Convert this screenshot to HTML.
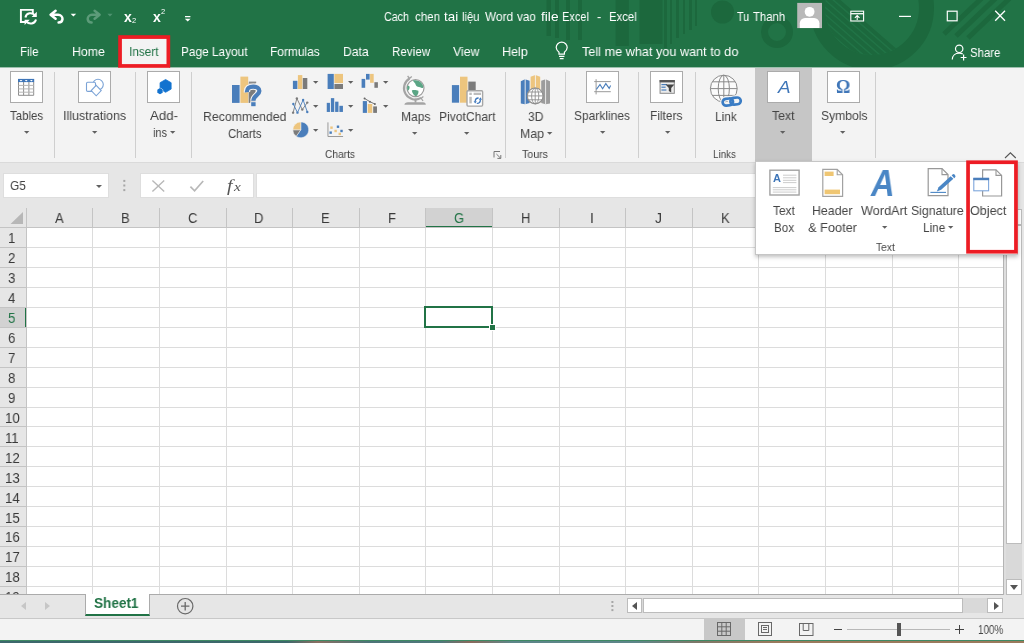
<!DOCTYPE html><html><head><meta charset="utf-8"><title>Excel</title><style>

html,body{margin:0;padding:0;}
body{width:1024px;height:643px;overflow:hidden;position:relative;background:#e6e6e6;font-family:"Liberation Sans",sans-serif;}
.a{position:absolute;box-sizing:border-box;}
.tl{position:absolute;white-space:pre;font-size:0;line-height:0;display:block;}
.tw{display:inline-block;vertical-align:top;line-height:1;white-space:pre;transform-origin:0 0;will-change:transform;}
.t{position:absolute;white-space:pre;line-height:1;transform-origin:0 0;display:block;will-change:transform;}
svg{overflow:visible;}

</style></head><body>
<div class="a " style="left:0px;top:0px;width:1024px;height:67px;background:#217346;"></div>
<div class="a " style="left:0px;top:67px;width:1024px;height:1px;background:#9cc0ad;"></div>
<svg class="a" style="left:0;top:0" width="1024" height="67" viewBox="0 0 1024 67"><defs><clipPath id="hc"><rect x="0" y="0" width="1024" height="67"/></clipPath><clipPath id="bigc"><circle cx="872" cy="8" r="47"/></clipPath></defs><g clip-path="url(#hc)" fill="#1c683d" stroke="none">
<rect x="546.5" y="0" width="4.5" height="36"/><rect x="555" y="0" width="4" height="38"/><rect x="566" y="0" width="4" height="40"/><rect x="578" y="0" width="4" height="40"/>
<rect x="615.6" y="0" width="13.2" height="46"/><rect x="639.5" y="0" width="23" height="44"/>
<rect x="664" y="0" width="3" height="48"/><rect x="670" y="0" width="2" height="44"/><rect x="676" y="0" width="3" height="38"/><rect x="683" y="0" width="2" height="34"/><rect x="689" y="0" width="3" height="30"/><rect x="695" y="0" width="2" height="26"/>
<circle cx="722.5" cy="12" r="11.5"/>
<circle cx="777" cy="32" r="12.5" fill="none" stroke="#1c683d" stroke-width="7"/>
<circle cx="872" cy="8" r="54.5" fill="none" stroke="#1c683d" stroke-width="15"/>
<g clip-path="url(#bigc)" stroke="#1c683d" stroke-width="3.9" fill="none"><path d="M832.8 -4L906.3 60M824.5 -4L898.0 60M816.3 -4L889.8 60M808.0 -4L881.5 60M799.8 -4L873.3 60M791.5 -4L865.0 60M783.3 -4L856.8 60"/></g>
<g stroke="#1c683d" stroke-width="5" fill="none"><path d="M944 34L984 -4M956 36L998 -4M968 38L1012 -4"/></g>
</g></svg>
<span class="tl" style="left:384.4px;top:10.96px;color:#fff;"><span class="tw" style="font-size:12.8px;width:25.00px;margin-left:0.00px;transform:scaleX(0.8368);">Cach</span> <span class="tw" style="font-size:12.8px;width:25.00px;margin-left:5.30px;transform:scaleX(0.9009);">chen</span> <span class="tw" style="font-size:12.8px;width:14.10px;margin-left:4.30px;transform:scaleX(1.0432);">tai</span> <span class="tw" style="font-size:12.8px;width:17.50px;margin-left:4.40px;transform:scaleX(0.8784);">liệu</span> <span class="tw" style="font-size:12.8px;width:28.10px;margin-left:4.70px;transform:scaleX(0.9261);">Word</span> <span class="tw" style="font-size:12.8px;width:18.80px;margin-left:4.70px;transform:scaleX(0.9108);">vao</span> <span class="tw" style="font-size:12.8px;width:17.50px;margin-left:4.30px;transform:scaleX(1.0697);">file</span> <span class="tw" style="font-size:12.8px;width:26.90px;margin-left:4.40px;transform:scaleX(0.8595);">Excel</span>  <span class="tw" style="font-size:12.8px;width:3.90px;margin-left:7.80px;transform:scaleX(0.9143);">-</span>  <span class="tw" style="font-size:12.8px;width:27.70px;margin-left:7.50px;transform:scaleX(0.8851);">Excel</span></span>
<span class="tl" style="left:737px;top:10.96px;color:#fff;"><span class="tw" style="font-size:12.8px;width:12.20px;margin-left:0.00px;transform:scaleX(0.8432);">Tu</span> <span class="tw" style="font-size:12.8px;width:32.10px;margin-left:4.30px;transform:scaleX(0.8844);">Thanh</span></span>
<span class="t" style="left:19.50px;top:45.13px;font-size:13.2px;color:#fff;transform:scaleX(0.8706);">File</span>
<span class="t" style="left:72.00px;top:45.13px;font-size:13.2px;color:#fff;transform:scaleX(0.9378);">Home</span>
<span class="t" style="left:180.50px;top:45.13px;font-size:13.2px;color:#fff;transform:scaleX(0.8979);">Page Layout</span>
<span class="t" style="left:269.90px;top:45.13px;font-size:13.2px;color:#fff;transform:scaleX(0.9060);">Formulas</span>
<span class="t" style="left:342.60px;top:45.13px;font-size:13.2px;color:#fff;transform:scaleX(0.9225);">Data</span>
<span class="t" style="left:391.50px;top:45.13px;font-size:13.2px;color:#fff;transform:scaleX(0.8809);">Review</span>
<span class="t" style="left:452.50px;top:45.13px;font-size:13.2px;color:#fff;transform:scaleX(0.9344);">View</span>
<span class="t" style="left:502.00px;top:45.13px;font-size:13.2px;color:#fff;transform:scaleX(0.9512);">Help</span>
<span class="t" style="left:582.00px;top:45.13px;font-size:13.2px;color:#fff;transform:scaleX(0.9605);">Tell me what you want to do</span>
<span class="t" style="left:970.00px;top:46.76px;font-size:12.8px;color:#fff;transform:scaleX(0.8900);">Share</span>
<div class="a " style="left:119px;top:36px;width:50px;height:32px;background:#f3f3f3;"></div>
<svg class="a" style="left:0px;top:0px;" width="1024" height="100" viewBox="0 0 1024 100"><rect x="120.05" y="37.05" width="48.3" height="28.9" fill="none" stroke="#ed1c24" stroke-width="3.7"/></svg>
<span class="t" style="left:128.50px;top:45.13px;font-size:13.2px;color:#217346;transform:scaleX(0.8944);">Insert</span>
<div class="a " style="left:0px;top:68px;width:1024px;height:94px;background:#f3f3f3;"></div>
<div class="a " style="left:0px;top:161.5px;width:1024px;height:1.5px;background:#dadada;"></div>
<div class="a " style="left:755px;top:68px;width:57px;height:94px;background:#c6c6c6;"></div>
<div class="a " style="left:54px;top:72px;width:1px;height:86px;background:#cfcfcf;"></div>
<div class="a " style="left:135px;top:72px;width:1px;height:86px;background:#cfcfcf;"></div>
<div class="a " style="left:191px;top:72px;width:1px;height:86px;background:#cfcfcf;"></div>
<div class="a " style="left:505px;top:72px;width:1px;height:86px;background:#cfcfcf;"></div>
<div class="a " style="left:565px;top:72px;width:1px;height:86px;background:#cfcfcf;"></div>
<div class="a " style="left:638px;top:72px;width:1px;height:86px;background:#cfcfcf;"></div>
<div class="a " style="left:695px;top:72px;width:1px;height:86px;background:#cfcfcf;"></div>
<div class="a " style="left:875px;top:72px;width:1px;height:86px;background:#cfcfcf;"></div>
<div class="a " style="left:10.2px;top:71.3px;width:33px;height:31.7px;background:#fff;border:1px solid #ababab;"></div>
<div class="a " style="left:78.3px;top:71.3px;width:33px;height:31.7px;background:#fff;border:1px solid #ababab;"></div>
<div class="a " style="left:147.3px;top:71.3px;width:33px;height:31.7px;background:#fff;border:1px solid #ababab;"></div>
<div class="a " style="left:586px;top:71.3px;width:33px;height:31.7px;background:#fff;border:1px solid #ababab;"></div>
<div class="a " style="left:650px;top:71.3px;width:33px;height:31.7px;background:#fff;border:1px solid #ababab;"></div>
<div class="a " style="left:767px;top:71.3px;width:33px;height:31.7px;background:#fff;border:1px solid #ababab;"></div>
<div class="a " style="left:827px;top:71.3px;width:33px;height:31.7px;background:#fff;border:1px solid #ababab;"></div>
<span class="t" style="left:9.80px;top:108.77px;font-size:13.5px;color:#444;transform:scaleX(0.8506);">Tables</span>
<svg class="a" style="left:23.8px;top:130.65px;" width="5.4" height="2.7" viewBox="0 0 5.4 2.7"><path d="M0 0H5.4L2.7 2.7Z" fill="#606060"/></svg>
<span class="t" style="left:63.30px;top:108.77px;font-size:13.5px;color:#444;transform:scaleX(0.9256);">Illustrations</span>
<svg class="a" style="left:92.3px;top:130.65px;" width="5.4" height="2.7" viewBox="0 0 5.4 2.7"><path d="M0 0H5.4L2.7 2.7Z" fill="#606060"/></svg>
<span class="t" style="left:150.00px;top:108.77px;font-size:13.5px;color:#444;transform:scaleX(0.9814);">Add-</span>
<span class="t" style="left:153.00px;top:125.57px;font-size:13.5px;color:#444;transform:scaleX(0.8109);">ins</span>
<svg class="a" style="left:169.8px;top:131.15px;" width="5.4" height="2.7" viewBox="0 0 5.4 2.7"><path d="M0 0H5.4L2.7 2.7Z" fill="#606060"/></svg>
<span class="t" style="left:202.50px;top:110.07px;font-size:13.5px;color:#444;transform:scaleX(0.9121);">Recommended</span>
<span class="t" style="left:227.50px;top:126.57px;font-size:13.5px;color:#444;transform:scaleX(0.8424);">Charts</span>
<span class="t" style="left:400.50px;top:110.07px;font-size:13.5px;color:#444;transform:scaleX(0.8935);">Maps</span>
<svg class="a" style="left:412.3px;top:131.65px;" width="5.4" height="2.7" viewBox="0 0 5.4 2.7"><path d="M0 0H5.4L2.7 2.7Z" fill="#606060"/></svg>
<span class="t" style="left:438.50px;top:110.07px;font-size:13.5px;color:#444;transform:scaleX(0.8964);">PivotChart</span>
<svg class="a" style="left:463.8px;top:131.65px;" width="5.4" height="2.7" viewBox="0 0 5.4 2.7"><path d="M0 0H5.4L2.7 2.7Z" fill="#606060"/></svg>
<span class="t" style="left:325.00px;top:149.47px;font-size:11.5px;color:#444;transform:scaleX(0.8856);">Charts</span>
<span class="t" style="left:527.50px;top:110.07px;font-size:13.5px;color:#444;transform:scaleX(0.8977);">3D</span>
<span class="t" style="left:519.50px;top:126.57px;font-size:13.5px;color:#444;transform:scaleX(0.9137);">Map</span>
<svg class="a" style="left:546.8px;top:131.65px;" width="5.4" height="2.7" viewBox="0 0 5.4 2.7"><path d="M0 0H5.4L2.7 2.7Z" fill="#606060"/></svg>
<span class="t" style="left:522.00px;top:149.47px;font-size:11.5px;color:#444;transform:scaleX(0.9244);">Tours</span>
<span class="t" style="left:574.00px;top:108.77px;font-size:13.5px;color:#444;transform:scaleX(0.8884);">Sparklines</span>
<svg class="a" style="left:599.6999999999999px;top:130.65px;" width="5.4" height="2.7" viewBox="0 0 5.4 2.7"><path d="M0 0H5.4L2.7 2.7Z" fill="#606060"/></svg>
<span class="t" style="left:650.20px;top:108.77px;font-size:13.5px;color:#444;transform:scaleX(0.8816);">Filters</span>
<svg class="a" style="left:664.5px;top:130.65px;" width="5.4" height="2.7" viewBox="0 0 5.4 2.7"><path d="M0 0H5.4L2.7 2.7Z" fill="#606060"/></svg>
<span class="t" style="left:714.60px;top:110.07px;font-size:13.5px;color:#444;transform:scaleX(0.8803);">Link</span>
<span class="t" style="left:713.00px;top:149.47px;font-size:11.5px;color:#444;transform:scaleX(0.8563);">Links</span>
<span class="t" style="left:772.00px;top:108.77px;font-size:13.5px;color:#444;transform:scaleX(0.9085);">Text</span>
<svg class="a" style="left:780.3px;top:130.65px;" width="5.4" height="2.7" viewBox="0 0 5.4 2.7"><path d="M0 0H5.4L2.7 2.7Z" fill="#606060"/></svg>
<span class="t" style="left:820.50px;top:108.77px;font-size:13.5px;color:#444;transform:scaleX(0.8983);">Symbols</span>
<svg class="a" style="left:840.3px;top:130.65px;" width="5.4" height="2.7" viewBox="0 0 5.4 2.7"><path d="M0 0H5.4L2.7 2.7Z" fill="#606060"/></svg>
<svg class="a" style="left:312.5px;top:80.65px;" width="5.4" height="2.7" viewBox="0 0 5.4 2.7"><path d="M0 0H5.4L2.7 2.7Z" fill="#606060"/></svg>
<svg class="a" style="left:312.5px;top:104.65px;" width="5.4" height="2.7" viewBox="0 0 5.4 2.7"><path d="M0 0H5.4L2.7 2.7Z" fill="#606060"/></svg>
<svg class="a" style="left:347.5px;top:80.65px;" width="5.4" height="2.7" viewBox="0 0 5.4 2.7"><path d="M0 0H5.4L2.7 2.7Z" fill="#606060"/></svg>
<svg class="a" style="left:347.5px;top:104.65px;" width="5.4" height="2.7" viewBox="0 0 5.4 2.7"><path d="M0 0H5.4L2.7 2.7Z" fill="#606060"/></svg>
<svg class="a" style="left:382.5px;top:80.65px;" width="5.4" height="2.7" viewBox="0 0 5.4 2.7"><path d="M0 0H5.4L2.7 2.7Z" fill="#606060"/></svg>
<svg class="a" style="left:382.5px;top:104.65px;" width="5.4" height="2.7" viewBox="0 0 5.4 2.7"><path d="M0 0H5.4L2.7 2.7Z" fill="#606060"/></svg>
<svg class="a" style="left:312.5px;top:128.65px;" width="5.4" height="2.7" viewBox="0 0 5.4 2.7"><path d="M0 0H5.4L2.7 2.7Z" fill="#606060"/></svg>
<svg class="a" style="left:347.5px;top:128.65px;" width="5.4" height="2.7" viewBox="0 0 5.4 2.7"><path d="M0 0H5.4L2.7 2.7Z" fill="#606060"/></svg>
<div class="a " style="left:0px;top:163px;width:1024px;height:45px;background:#e6e6e6;"></div>
<div class="a " style="left:3px;top:173px;width:106px;height:25px;background:#fff;border:1px solid #dedede;"></div>
<span class="t" style="left:9.60px;top:179.07px;font-size:13.5px;color:#444;transform:scaleX(0.8770);">G5</span>
<svg class="a" style="left:95.5px;top:184.5px;" width="6" height="3" viewBox="0 0 6 3"><path d="M0 0H6L3 3Z" fill="#606060"/></svg>
<div class="a " style="left:140px;top:173px;width:114px;height:25px;background:#fff;border:1px solid #dedede;"></div>
<div class="a " style="left:256px;top:173px;width:748px;height:25px;background:#fff;border:1px solid #dedede;"></div>
<svg class="a" style="left:123px;top:179px;" width="3" height="13" viewBox="0 0 3 13"><rect x="0.3" y="0.9" width="2" height="2" fill="#a6a6a6"/><rect x="0.3" y="5.5" width="2" height="2" fill="#a6a6a6"/><rect x="0.3" y="10.1" width="2" height="2" fill="#a6a6a6"/></svg>
<div class="a " style="left:0px;top:208px;width:1003px;height:386px;background:#fff;"></div>
<div class="a " style="left:0px;top:208px;width:1003px;height:19.5px;background:#e6e6e6;"></div>
<div class="a " style="left:0px;top:208px;width:26.3px;height:386px;background:#e6e6e6;"></div>
<div class="a " style="left:425.9px;top:208px;width:66.6px;height:19.5px;background:#d2d2d2;"></div>
<div class="a " style="left:425.9px;top:225.5px;width:67.1px;height:2px;background:#217346;"></div>
<div class="a " style="left:0px;top:307.168px;width:26.3px;height:19.967px;background:#d2d2d2;"></div>
<div class="a " style="left:24.8px;top:307.168px;width:2px;height:20.467px;background:#217346;"></div>
<div class="a " style="left:25.8px;top:227.5px;width:1px;height:366.5px;background:#dcdcdc;"></div>
<div class="a " style="left:92.39999999999999px;top:227.5px;width:1px;height:366.5px;background:#dcdcdc;"></div>
<div class="a " style="left:92.39999999999999px;top:208px;width:1px;height:19.5px;background:#c4c4c4;"></div>
<div class="a " style="left:159.0px;top:227.5px;width:1px;height:366.5px;background:#dcdcdc;"></div>
<div class="a " style="left:159.0px;top:208px;width:1px;height:19.5px;background:#c4c4c4;"></div>
<div class="a " style="left:225.6px;top:227.5px;width:1px;height:366.5px;background:#dcdcdc;"></div>
<div class="a " style="left:225.6px;top:208px;width:1px;height:19.5px;background:#c4c4c4;"></div>
<div class="a " style="left:292.2px;top:227.5px;width:1px;height:366.5px;background:#dcdcdc;"></div>
<div class="a " style="left:292.2px;top:208px;width:1px;height:19.5px;background:#c4c4c4;"></div>
<div class="a " style="left:358.8px;top:227.5px;width:1px;height:366.5px;background:#dcdcdc;"></div>
<div class="a " style="left:358.8px;top:208px;width:1px;height:19.5px;background:#c4c4c4;"></div>
<div class="a " style="left:425.4px;top:227.5px;width:1px;height:366.5px;background:#dcdcdc;"></div>
<div class="a " style="left:425.4px;top:208px;width:1px;height:19.5px;background:#c4c4c4;"></div>
<div class="a " style="left:491.99999999999994px;top:227.5px;width:1px;height:366.5px;background:#dcdcdc;"></div>
<div class="a " style="left:491.99999999999994px;top:208px;width:1px;height:19.5px;background:#c4c4c4;"></div>
<div class="a " style="left:558.5999999999999px;top:227.5px;width:1px;height:366.5px;background:#dcdcdc;"></div>
<div class="a " style="left:558.5999999999999px;top:208px;width:1px;height:19.5px;background:#c4c4c4;"></div>
<div class="a " style="left:625.1999999999999px;top:227.5px;width:1px;height:366.5px;background:#dcdcdc;"></div>
<div class="a " style="left:625.1999999999999px;top:208px;width:1px;height:19.5px;background:#c4c4c4;"></div>
<div class="a " style="left:691.8px;top:227.5px;width:1px;height:366.5px;background:#dcdcdc;"></div>
<div class="a " style="left:691.8px;top:208px;width:1px;height:19.5px;background:#c4c4c4;"></div>
<div class="a " style="left:758.3999999999999px;top:227.5px;width:1px;height:366.5px;background:#dcdcdc;"></div>
<div class="a " style="left:758.3999999999999px;top:208px;width:1px;height:19.5px;background:#c4c4c4;"></div>
<div class="a " style="left:824.9999999999999px;top:227.5px;width:1px;height:366.5px;background:#dcdcdc;"></div>
<div class="a " style="left:824.9999999999999px;top:208px;width:1px;height:19.5px;background:#c4c4c4;"></div>
<div class="a " style="left:891.5999999999999px;top:227.5px;width:1px;height:366.5px;background:#dcdcdc;"></div>
<div class="a " style="left:891.5999999999999px;top:208px;width:1px;height:19.5px;background:#c4c4c4;"></div>
<div class="a " style="left:958.1999999999998px;top:227.5px;width:1px;height:366.5px;background:#dcdcdc;"></div>
<div class="a " style="left:958.1999999999998px;top:208px;width:1px;height:19.5px;background:#c4c4c4;"></div>
<div class="a " style="left:1024.8px;top:227.5px;width:1px;height:366.5px;background:#dcdcdc;"></div>
<div class="a " style="left:1024.8px;top:208px;width:1px;height:19.5px;background:#c4c4c4;"></div>
<div class="a " style="left:26.3px;top:226.8px;width:977px;height:1px;background:#dcdcdc;"></div>
<div class="a " style="left:26.3px;top:246.767px;width:977px;height:1px;background:#dcdcdc;"></div>
<div class="a " style="left:0px;top:246.767px;width:26.3px;height:1px;background:#c4c4c4;"></div>
<div class="a " style="left:26.3px;top:266.73400000000004px;width:977px;height:1px;background:#dcdcdc;"></div>
<div class="a " style="left:0px;top:266.73400000000004px;width:26.3px;height:1px;background:#c4c4c4;"></div>
<div class="a " style="left:26.3px;top:286.701px;width:977px;height:1px;background:#dcdcdc;"></div>
<div class="a " style="left:0px;top:286.701px;width:26.3px;height:1px;background:#c4c4c4;"></div>
<div class="a " style="left:26.3px;top:306.668px;width:977px;height:1px;background:#dcdcdc;"></div>
<div class="a " style="left:0px;top:306.668px;width:26.3px;height:1px;background:#c4c4c4;"></div>
<div class="a " style="left:26.3px;top:326.635px;width:977px;height:1px;background:#dcdcdc;"></div>
<div class="a " style="left:0px;top:326.635px;width:26.3px;height:1px;background:#c4c4c4;"></div>
<div class="a " style="left:26.3px;top:346.602px;width:977px;height:1px;background:#dcdcdc;"></div>
<div class="a " style="left:0px;top:346.602px;width:26.3px;height:1px;background:#c4c4c4;"></div>
<div class="a " style="left:26.3px;top:366.569px;width:977px;height:1px;background:#dcdcdc;"></div>
<div class="a " style="left:0px;top:366.569px;width:26.3px;height:1px;background:#c4c4c4;"></div>
<div class="a " style="left:26.3px;top:386.536px;width:977px;height:1px;background:#dcdcdc;"></div>
<div class="a " style="left:0px;top:386.536px;width:26.3px;height:1px;background:#c4c4c4;"></div>
<div class="a " style="left:26.3px;top:406.503px;width:977px;height:1px;background:#dcdcdc;"></div>
<div class="a " style="left:0px;top:406.503px;width:26.3px;height:1px;background:#c4c4c4;"></div>
<div class="a " style="left:26.3px;top:426.47px;width:977px;height:1px;background:#dcdcdc;"></div>
<div class="a " style="left:0px;top:426.47px;width:26.3px;height:1px;background:#c4c4c4;"></div>
<div class="a " style="left:26.3px;top:446.437px;width:977px;height:1px;background:#dcdcdc;"></div>
<div class="a " style="left:0px;top:446.437px;width:26.3px;height:1px;background:#c4c4c4;"></div>
<div class="a " style="left:26.3px;top:466.404px;width:977px;height:1px;background:#dcdcdc;"></div>
<div class="a " style="left:0px;top:466.404px;width:26.3px;height:1px;background:#c4c4c4;"></div>
<div class="a " style="left:26.3px;top:486.371px;width:977px;height:1px;background:#dcdcdc;"></div>
<div class="a " style="left:0px;top:486.371px;width:26.3px;height:1px;background:#c4c4c4;"></div>
<div class="a " style="left:26.3px;top:506.338px;width:977px;height:1px;background:#dcdcdc;"></div>
<div class="a " style="left:0px;top:506.338px;width:26.3px;height:1px;background:#c4c4c4;"></div>
<div class="a " style="left:26.3px;top:526.3050000000001px;width:977px;height:1px;background:#dcdcdc;"></div>
<div class="a " style="left:0px;top:526.3050000000001px;width:26.3px;height:1px;background:#c4c4c4;"></div>
<div class="a " style="left:26.3px;top:546.2719999999999px;width:977px;height:1px;background:#dcdcdc;"></div>
<div class="a " style="left:0px;top:546.2719999999999px;width:26.3px;height:1px;background:#c4c4c4;"></div>
<div class="a " style="left:26.3px;top:566.239px;width:977px;height:1px;background:#dcdcdc;"></div>
<div class="a " style="left:0px;top:566.239px;width:26.3px;height:1px;background:#c4c4c4;"></div>
<div class="a " style="left:26.3px;top:586.2059999999999px;width:977px;height:1px;background:#dcdcdc;"></div>
<div class="a " style="left:0px;top:586.2059999999999px;width:26.3px;height:1px;background:#c4c4c4;"></div>
<div class="a " style="left:0px;top:227px;width:1003px;height:1px;background:#c4c4c4;"></div>
<div class="a " style="left:25.8px;top:208px;width:1px;height:386px;background:#c4c4c4;"></div>
<span class="t" style="left:54.76px;top:211.15px;font-size:14px;color:#3a3a3a;transform:scaleX(0.9300);">A</span>
<span class="t" style="left:121.36px;top:211.15px;font-size:14px;color:#3a3a3a;transform:scaleX(0.9300);">B</span>
<span class="t" style="left:187.59px;top:211.15px;font-size:14px;color:#3a3a3a;transform:scaleX(0.9300);">C</span>
<span class="t" style="left:254.19px;top:211.15px;font-size:14px;color:#3a3a3a;transform:scaleX(0.9300);">D</span>
<span class="t" style="left:321.16px;top:211.15px;font-size:14px;color:#3a3a3a;transform:scaleX(0.9300);">E</span>
<span class="t" style="left:388.12px;top:211.15px;font-size:14px;color:#3a3a3a;transform:scaleX(0.9300);">F</span>
<span class="t" style="left:453.64px;top:211.15px;font-size:14px;color:#217346;transform:scaleX(0.9300);">G</span>
<span class="t" style="left:520.59px;top:211.15px;font-size:14px;color:#3a3a3a;transform:scaleX(0.9300);">H</span>
<span class="t" style="left:590.09px;top:211.15px;font-size:14px;color:#3a3a3a;transform:scaleX(0.9300);">I</span>
<span class="t" style="left:655.24px;top:211.15px;font-size:14px;color:#3a3a3a;transform:scaleX(0.9300);">J</span>
<span class="t" style="left:720.76px;top:211.15px;font-size:14px;color:#3a3a3a;transform:scaleX(0.9300);">K</span>
<span class="t" style="left:8.23px;top:230.98px;font-size:14.2px;color:#3a3a3a;transform:scaleX(0.9300);">1</span>
<span class="t" style="left:8.23px;top:250.95px;font-size:14.2px;color:#3a3a3a;transform:scaleX(0.9300);">2</span>
<span class="t" style="left:8.23px;top:270.91px;font-size:14.2px;color:#3a3a3a;transform:scaleX(0.9300);">3</span>
<span class="t" style="left:8.23px;top:290.88px;font-size:14.2px;color:#3a3a3a;transform:scaleX(0.9300);">4</span>
<span class="t" style="left:8.23px;top:310.85px;font-size:14.2px;color:#217346;transform:scaleX(0.9300);">5</span>
<span class="t" style="left:8.23px;top:330.81px;font-size:14.2px;color:#3a3a3a;transform:scaleX(0.9300);">6</span>
<span class="t" style="left:8.23px;top:350.78px;font-size:14.2px;color:#3a3a3a;transform:scaleX(0.9300);">7</span>
<span class="t" style="left:8.23px;top:370.75px;font-size:14.2px;color:#3a3a3a;transform:scaleX(0.9300);">8</span>
<span class="t" style="left:8.23px;top:390.72px;font-size:14.2px;color:#3a3a3a;transform:scaleX(0.9300);">9</span>
<span class="t" style="left:4.56px;top:410.68px;font-size:14.2px;color:#3a3a3a;transform:scaleX(0.9300);">10</span>
<span class="t" style="left:5.05px;top:430.65px;font-size:14.2px;color:#3a3a3a;transform:scaleX(0.9300);">11</span>
<span class="t" style="left:4.56px;top:450.62px;font-size:14.2px;color:#3a3a3a;transform:scaleX(0.9300);">12</span>
<span class="t" style="left:4.56px;top:470.58px;font-size:14.2px;color:#3a3a3a;transform:scaleX(0.9300);">13</span>
<span class="t" style="left:4.56px;top:490.55px;font-size:14.2px;color:#3a3a3a;transform:scaleX(0.9300);">14</span>
<span class="t" style="left:4.56px;top:510.52px;font-size:14.2px;color:#3a3a3a;transform:scaleX(0.9300);">15</span>
<span class="t" style="left:4.56px;top:530.48px;font-size:14.2px;color:#3a3a3a;transform:scaleX(0.9300);">16</span>
<span class="t" style="left:4.56px;top:550.45px;font-size:14.2px;color:#3a3a3a;transform:scaleX(0.9300);">17</span>
<span class="t" style="left:4.56px;top:570.42px;font-size:14.2px;color:#3a3a3a;transform:scaleX(0.9300);">18</span>
<span class="t" style="left:4.56px;top:590.39px;font-size:14.2px;color:#3a3a3a;transform:scaleX(0.9300);">19</span>
<svg class="a" style="left:10px;top:212px;" width="13.5" height="12.5" viewBox="0 0 13.5 12.5"><path d="M13 0V12H0.5Z" fill="#b7b7b7"/></svg>
<div class="a " style="left:424px;top:306px;width:69px;height:22px;border:2px solid #217346;"></div>
<div class="a " style="left:489px;top:324px;width:7px;height:7px;background:#217346;border:1px solid #fff;"></div>
<div class="a " style="left:0px;top:594px;width:1024px;height:24px;background:#e6e6e6;"></div>
<div class="a " style="left:0px;top:594px;width:1003px;height:1px;background:#ababab;"></div>
<div class="a " style="left:1003px;top:163px;width:21px;height:431px;background:#e6e6e6;"></div>
<div class="a " style="left:84.5px;top:594px;width:65px;height:21.5px;background:#fff;border:1px solid #ababab;border-top:none;border-bottom:2px solid #217346;"></div>
<span class="t" style="left:94.00px;top:596.15px;font-size:14px;color:#217346;font-weight:700;transform:scaleX(0.9690);">Sheet1</span>
<svg class="a" style="left:21px;top:602px;" width="5" height="8" viewBox="0 0 5 8"><path d="M5 0V8L0 4Z" fill="#c6c6c6"/></svg>
<svg class="a" style="left:45px;top:602px;" width="5" height="8" viewBox="0 0 5 8"><path d="M0 0V8L5 4Z" fill="#c6c6c6"/></svg>
<svg class="a" style="left:176px;top:597px;" width="18" height="18" viewBox="0 0 18 18"><circle cx="9.2" cy="9.2" r="7.7" fill="none" stroke="#6a6a6a" stroke-width="1.2"/><path d="M9.2 5V13.4M5 9.2H13.4" stroke="#6a6a6a" stroke-width="1.3"/></svg>
<svg class="a" style="left:611px;top:600px;" width="3" height="13" viewBox="0 0 3 13"><rect x="0.4" y="1" width="2" height="2" fill="#a6a6a6"/><rect x="0.4" y="5" width="2" height="2" fill="#a6a6a6"/><rect x="0.4" y="9.1" width="2" height="2" fill="#a6a6a6"/></svg>
<div class="a " style="left:626.5px;top:598.3px;width:376px;height:15.2px;background:#d9d9d9;"></div>
<div class="a " style="left:626.5px;top:598.3px;width:15.5px;height:15.2px;background:#fff;border:1px solid #bcbcbc;"></div>
<div class="a " style="left:987.3px;top:598.3px;width:15.5px;height:15.2px;background:#fff;border:1px solid #bcbcbc;"></div>
<div class="a " style="left:642.5px;top:598.3px;width:320px;height:15.2px;background:#fff;border:1px solid #bcbcbc;"></div>
<svg class="a" style="left:631.5px;top:602px;" width="5" height="8" viewBox="0 0 5 8"><path d="M5 0V8L0 4Z" fill="#555"/></svg>
<svg class="a" style="left:994px;top:602px;" width="5" height="8" viewBox="0 0 5 8"><path d="M0 0V8L5 4Z" fill="#555"/></svg>
<div class="a " style="left:1003px;top:208px;width:1px;height:387px;background:#b4b4b4;"></div>
<div class="a " style="left:1004px;top:208px;width:2px;height:387px;background:#dedede;"></div>
<div class="a " style="left:1006px;top:209px;width:16px;height:385px;background:#d9d9d9;"></div>
<div class="a " style="left:1006px;top:209px;width:16px;height:16px;background:#fff;border:1px solid #bcbcbc;"></div>
<div class="a " style="left:1006px;top:225px;width:16px;height:319px;background:#fff;border:1px solid #bcbcbc;"></div>
<div class="a " style="left:1006px;top:579px;width:16px;height:16px;background:#fff;border:1px solid #bcbcbc;"></div>
<svg class="a" style="left:1010px;top:585px;" width="8" height="5" viewBox="0 0 8 5"><path d="M0 0H8L4 5Z" fill="#555"/></svg>
<div class="a " style="left:0px;top:618px;width:1024px;height:22px;background:#f3f3f3;"></div>
<div class="a " style="left:0px;top:618px;width:1024px;height:1px;background:#c8c8c8;"></div>
<div class="a " style="left:703.5px;top:618.5px;width:41px;height:21.5px;background:#c8c8c8;"></div>
<span class="t" style="left:978.00px;top:624.34px;font-size:12px;color:#444;transform:scaleX(0.8208);">100%</span>
<div class="a " style="left:847px;top:629px;width:103px;height:1px;background:#b8b8b8;"></div>
<div class="a " style="left:897px;top:623px;width:3.5px;height:13px;background:#555;"></div>
<div class="a " style="left:834px;top:629px;width:8px;height:1px;background:#444;"></div>
<div class="a " style="left:955px;top:629px;width:9px;height:1px;background:#444;"></div>
<div class="a " style="left:959px;top:625px;width:1px;height:9px;background:#444;"></div>
<div class="a " style="left:0px;top:640px;width:1024px;height:1px;background:#3f8a64;"></div>
<div class="a " style="left:0px;top:641px;width:1024px;height:2px;background:linear-gradient(90deg,#3c686c 0%,#3d676b 28%,#8a6f62 31%,#4d7478 36%,#4f787b 43%,#8a6a5c 46%,#5d8689 50%,#5d8689 62%,#7d7868 68%,#9b7a5c 76%,#9b7a5c 100%);"></div>
<div class="a " style="left:755px;top:161px;width:263px;height:94px;background:#fff;border:1px solid #c6c6c6;box-shadow:0 2px 4px rgba(0,0,0,0.25);"></div>
<span class="t" style="left:773.20px;top:203.94px;font-size:13.3px;color:#444;transform:scaleX(0.8938);">Text</span>
<span class="t" style="left:774.00px;top:220.74px;font-size:13.3px;color:#444;transform:scaleX(0.8813);">Box</span>
<span class="t" style="left:812.00px;top:203.94px;font-size:13.3px;color:#444;transform:scaleX(0.9284);">Header</span>
<span class="t" style="left:807.50px;top:220.74px;font-size:13.3px;color:#444;transform:scaleX(0.9608);">&amp; Footer</span>
<span class="t" style="left:861.00px;top:203.94px;font-size:13.3px;color:#444;transform:scaleX(0.9540);">WordArt</span>
<svg class="a" style="left:881.8px;top:225.65px;" width="5.4" height="2.7" viewBox="0 0 5.4 2.7"><path d="M0 0H5.4L2.7 2.7Z" fill="#606060"/></svg>
<span class="t" style="left:911.30px;top:203.94px;font-size:13.3px;color:#444;transform:scaleX(0.9258);">Signature</span>
<span class="t" style="left:922.50px;top:220.74px;font-size:13.3px;color:#444;transform:scaleX(0.8870);">Line</span>
<svg class="a" style="left:947.8px;top:225.65px;" width="5.4" height="2.7" viewBox="0 0 5.4 2.7"><path d="M0 0H5.4L2.7 2.7Z" fill="#606060"/></svg>
<span class="t" style="left:970.00px;top:203.94px;font-size:13.3px;color:#444;transform:scaleX(0.9470);">Object</span>
<span class="t" style="left:876.30px;top:241.87px;font-size:11.5px;color:#444;transform:scaleX(0.8865);">Text</span>
<svg class="a" style="left:0px;top:0px;" width="1024" height="643" viewBox="0 0 1024 643"><rect x="968.05" y="162.25" width="47.9" height="89.5" fill="none" stroke="#ed1c24" stroke-width="3.7"/></svg>
<svg class="a" style="left:0;top:0" width="1024" height="643" viewBox="0 0 1024 643"><g fill="none" stroke="#fff" stroke-width="1.9"><path d="M26.4 22H20.9V9.9H32.8V13.6"/><path d="M25.4 17.4A5.4 5.4 0 0 1 35 15.4" stroke-width="2"/><path d="M36 19.4A5.4 5.4 0 0 1 26.4 21.4" stroke-width="2"/></g><path d="M36.8 11.8V17H31.6Z M24.6 25V19.8H29.8Z" fill="#fff"/><path d="M55.6 10.8L50.6 14.8L55.6 18.8M51 14.8H58.2A4.3 4.3 0 0 1 62.5 19.1A4 4 0 0 1 58.6 22.6" fill="none" stroke="#fff" stroke-width="2.5" stroke-linecap="round" stroke-linejoin="round"/><path d="M70.6 13.8H76.2L73.4 16.6Z" fill="#fff"/><path d="M94.6 10.8L99.6 14.8L94.6 18.8M99.2 14.8H92A4.3 4.3 0 0 0 87.7 19.1A4 4 0 0 0 91.6 22.6" fill="none" stroke="#5c9b79" stroke-width="2.5" stroke-linecap="round" stroke-linejoin="round"/><path d="M107.4 13.8H112.6L110 16.4Z" fill="#4f9370"/><path d="M185 16H190.4V17.3H185Z M184.8 18.8H190.6L187.7 21.6Z" fill="#fff"/><rect x="797.2" y="2.9" width="24.8" height="25.2" fill="#b9b9b9"/><circle cx="809.6" cy="11.8" r="4.9" fill="#fff"/><path d="M799.8 28.1V23.2A5.2 5.2 0 0 1 805 18H814.2A5.2 5.2 0 0 1 819.4 23.2V28.1Z" fill="#fff"/><g fill="none" stroke="#fff" stroke-width="1.1"><rect x="850.8" y="11.2" width="12.8" height="9.8"/><path d="M850.8 13.7H863.6" stroke-width="1.3"/><path d="M857.2 20V15.6M854.9 17.8L857.2 15.5L859.5 17.8" /></g><path d="M899 16.4H911" stroke="#fff" stroke-width="1.2"/><rect x="947.3" y="11.2" width="9.8" height="9.6" fill="none" stroke="#fff" stroke-width="1.2"/><path d="M995.2 10.8L1005 20.8M1005 10.8L995.2 20.8" stroke="#fff" stroke-width="1.3"/><g fill="none" stroke="#fff" stroke-width="1.2"><path d="M559 54.2V52.3C557.3 50.8 556.2 49.6 556.2 47.6A5.5 5.5 0 0 1 567.2 47.6C567.2 49.6 566.1 50.8 564.4 52.3V54.2Z"/><path d="M559 56.4H564.4M559.8 58.6H563.6"/></g><g fill="none" stroke="#fff" stroke-width="1.2"><circle cx="959.2" cy="48.8" r="3.7"/><path d="M952.3 59.6C952.3 55.6 955.2 53.2 959.2 53.2C960.6 53.2 961.8 53.5 962.8 54"/><path d="M963.6 54.6V60.4M960.7 57.5H966.5"/></g><rect x="18.00" y="78.90" width="16.20" height="16.90" fill="#fff"/><rect x="18.00" y="78.90" width="16.20" height="3.20" fill="#3f76b8"/><path d="M19.6 80H22.4L21 81.4Z M24.8 80H27.6L26.2 81.4Z M30 80H32.8L31.4 81.4Z" fill="#fff"/><g stroke="#8e8e8e" stroke-width="1" fill="none"><path d="M18.5 82V95.3H33.7V82M23.6 82V95.3M28.9 82V95.3"/><path d="M18.5 85.4H33.7M18.5 88.9H33.7M18.5 92.2H33.7" stroke="#b5b5b5"/></g><g fill="none" stroke="#7ba3d6" stroke-width="1.1"><circle cx="98" cy="84.6" r="5.3" fill="#fff"/><rect x="86.5" y="82.2" width="9" height="9.2" rx="1.2" fill="#fff"/><path d="M96.2 85.4L101.2 90.6L96.2 95.8L91.2 90.6Z" fill="#fff"/></g><path d="M165.60 79.50L171.14 82.70L171.14 89.10L165.60 92.30L160.06 89.10L160.06 82.70Z" fill="#1272cf" stroke="#1272cf" stroke-width="0.8" stroke-linejoin="round"/><path d="M160.00 88.10L162.68 89.65L162.68 92.75L160.00 94.30L157.32 92.75L157.32 89.65Z" fill="#1272cf" stroke="#fff" stroke-width="1" stroke-linejoin="round" paint-order="stroke"/><rect x="248.60" y="83.40" width="7.00" height="19.50" fill="#7b7b7b"/><rect x="248.80" y="81.60" width="7.40" height="1.40" fill="#8a8a8a"/><rect x="232.00" y="85.00" width="7.60" height="17.90" fill="#4a7ebb"/><rect x="240.40" y="76.60" width="7.80" height="26.30" fill="#edc57e"/><path d="M247 92.2C246.6 88 249.4 86.6 253.2 86.6C256.8 86.6 259.4 88.2 259.4 91C259.4 95 253.4 95.4 253.4 100.8" fill="none" stroke="#f3f3f3" stroke-width="6.4"/><rect x="250.2" y="101.2" width="6.4" height="6" fill="#f3f3f3"/><path d="M247 92.2C246.6 88 249.4 86.6 253.2 86.6C256.8 86.6 259.4 88.2 259.4 91C259.4 95 253.4 95.4 253.4 100.8" fill="none" stroke="#4a7ebb" stroke-width="4.2"/><rect x="251.2" y="102.2" width="4.4" height="4" fill="#4a7ebb"/><rect x="292.90" y="80.80" width="4.50" height="8.20" fill="#4a7ebb"/><rect x="297.90" y="75.10" width="4.40" height="13.90" fill="#edc57e"/><rect x="302.80" y="78.00" width="4.50" height="11.00" fill="#7b7b7b"/><rect x="327.60" y="73.90" width="6.20" height="15.10" fill="#4a7ebb"/><rect x="334.40" y="73.90" width="8.60" height="9.20" fill="#edc57e"/><rect x="334.40" y="84.00" width="8.60" height="5.00" fill="#7b7b7b"/><rect x="361.60" y="78.90" width="3.60" height="8.90" fill="#4a7ebb"/><rect x="366.00" y="73.90" width="3.60" height="5.70" fill="#4a7ebb"/><rect x="370.10" y="73.90" width="3.60" height="8.90" fill="#edc57e"/><rect x="374.40" y="82.20" width="3.50" height="5.60" fill="#7b7b7b"/><path d="M293.09 112.66L296.87 98.48L302.30 109.59L307.27 102.62" fill="none" stroke="#7b7b7b" stroke-width="0.9"/><circle cx="293.09" cy="112.66" r="1.2" fill="#7b7b7b"/><circle cx="296.87" cy="98.48" r="1.2" fill="#7b7b7b"/><circle cx="302.30" cy="109.59" r="1.2" fill="#7b7b7b"/><circle cx="307.27" cy="102.62" r="1.2" fill="#7b7b7b"/><path d="M293.33 104.03L297.46 112.66L303.13 99.90L307.27 111.95" fill="none" stroke="#4a7ebb" stroke-width="0.9"/><circle cx="293.33" cy="104.03" r="1.2" fill="#4a7ebb"/><circle cx="297.46" cy="112.66" r="1.2" fill="#4a7ebb"/><circle cx="303.13" cy="99.90" r="1.2" fill="#4a7ebb"/><circle cx="307.27" cy="111.95" r="1.2" fill="#4a7ebb"/><rect x="326.76" y="102.85" width="3.19" height="9.10" fill="#4a7ebb"/><rect x="330.90" y="98.13" width="3.31" height="13.82" fill="#4a7ebb"/><rect x="335.15" y="101.67" width="3.31" height="10.28" fill="#4a7ebb"/><rect x="339.40" y="105.81" width="3.54" height="6.14" fill="#4a7ebb"/><rect x="362.80" y="101.08" width="4.14" height="11.81" fill="#4a7ebb"/><rect x="367.76" y="104.03" width="4.49" height="8.86" fill="#edc57e"/><rect x="373.19" y="106.40" width="3.78" height="6.50" fill="#7b7b7b"/><path d="M364.57 98.48L369.88 101.67L374.85 104.03" fill="none" stroke="#666" stroke-width="0.9"/><circle cx="364.57" cy="98.48" r="1.0" fill="#666"/><circle cx="369.88" cy="101.67" r="1.0" fill="#666"/><circle cx="374.85" cy="104.03" r="1.0" fill="#666"/><path d="M300.77 129.79L300.77 121.89A7.9 7.9 0 1 1 296.24 136.26Z" fill="#4a7ebb" stroke="#f3f3f3" stroke-width="0.5"/><path d="M300.77 129.79L296.24 136.26A7.9 7.9 0 0 1 292.87 129.79Z" fill="#7b7b7b" stroke="#f3f3f3" stroke-width="0.5"/><path d="M300.77 129.79L292.87 129.79A7.9 7.9 0 0 1 300.77 121.89Z" fill="#edc57e" stroke="#f3f3f3" stroke-width="0.5"/><path d="M327.94 122.35V136.53H343.07" fill="none" stroke="#9a9a9a" stroke-width="1"/><rect x="330.29" y="126.46" width="2.40" height="2.40" fill="#edc57e"/><rect x="336.78" y="125.52" width="2.40" height="2.40" fill="#4a7ebb"/><rect x="334.42" y="129.77" width="2.40" height="2.40" fill="#edc57e"/><rect x="329.46" y="131.43" width="2.40" height="2.40" fill="#4a7ebb"/><rect x="340.33" y="129.77" width="2.40" height="2.40" fill="#4a7ebb"/><rect x="338.56" y="132.73" width="2.40" height="2.40" fill="#edc57e"/><path d="M409.5 78.5A11.3 11.3 0 1 0 421.2 97.9" fill="none" stroke="#a4a4a4" stroke-width="2.2"/><path d="M407.6 76L410 79M411.8 76.6L409.4 78.6M423.4 96.4L421.2 98.2M421 98L423 101" stroke="#a4a4a4" stroke-width="1.3" fill="none"/><circle cx="415.5" cy="88.1" r="8.5" fill="#fff" stroke="#9c9c9c" stroke-width="1.2"/><path d="M412.8 80.6C415.4 79.6 419.6 80.6 421.8 83.4C423.2 85.2 423.4 87 423 88C421.6 88.2 420.4 87.2 419 87C417.2 86.8 416 86 415.6 84.4C415.4 83 414 82.6 412.8 80.6Z M407.4 86C408.4 85.4 409.4 85.8 409.6 87C409.6 88.6 409 90 408 90.8C407.2 89.4 407 87.6 407.4 86Z M411.8 90.4C413.4 89.6 416.6 89.8 418.4 90.8C418.8 92.8 418 95 416.2 96.2C414.4 96 412.4 93.4 411.8 90.4Z" fill="#5ba585"/><rect x="414.60" y="98.60" width="1.80" height="4.00" fill="#a4a4a4"/><path d="M404.4 104.7C404.4 103.2 406 102.3 408 102.3H423C425 102.3 425.8 103.2 425.8 104.7Z" fill="#a4a4a4"/><rect x="451.90" y="85.10" width="7.20" height="17.60" fill="#4a7ebb"/><rect x="460.00" y="76.70" width="7.50" height="26.00" fill="#edc57e"/><rect x="468.30" y="81.60" width="7.40" height="8.40" fill="#7b7b7b"/><rect x="467" y="90.7" width="15.6" height="15.4" rx="1" fill="#fff" stroke="#a6a6a6" stroke-width="1.4"/><rect x="469.30" y="92.70" width="2.50" height="2.30" fill="#bdbdbd"/><rect x="473.60" y="92.70" width="7.40" height="2.30" fill="#bdbdbd"/><rect x="469.30" y="96.80" width="2.50" height="6.60" fill="#bdbdbd"/><path d="M475.2 101.6C475.2 99 476.6 98 478.6 98M480.4 99.4C480.4 102 479 103.4 476.8 103.4" fill="none" stroke="#3f78bd" stroke-width="1.3"/><path d="M473.6 101.2H476.8L475.2 103.6Z M478.8 99.8H482L480.4 97.2Z" fill="#3f78bd"/><path d="M520.8 81.2L525 79.2L529.6 80.8V103L525 104.2L520.8 103.4Z" fill="#4a7ebb"/><path d="M525.2 79V104.4" stroke="#f3f3f3" stroke-width="0.9"/><path d="M530.6 76.8L535.4 75L540.2 76.8V103L530.6 103Z" fill="#edc57e"/><path d="M535.4 74.8V92" stroke="#f3f3f3" stroke-width="0.9"/><path d="M541.2 80.8L545.6 79.2L550 81.2V103.4L545.6 104.2L541.2 103Z" fill="#9c9c9c"/><path d="M545.6 79V104.4" stroke="#f3f3f3" stroke-width="0.9"/><g fill="none" stroke="#8f8f8f" stroke-width="0.9"><circle cx="535.2" cy="95.9" r="7.9" fill="#fff" stroke-width="1.2"/><ellipse cx="535.2" cy="95.9" rx="3.6" ry="7.9"/><path d="M535.2 88V103.8M527.3 95.9H543.1M528.4 92H542M528.4 99.8H542"/></g><g fill="none" stroke="#9a9a9a" stroke-width="1"><path d="M596.1 79.2V94.4M594.2 81.6H610.8M594.2 91.7H610.8"/></g><path d="M596.4 89.4L600 84.4L602.6 88.8L605.8 83.6L609.2 88.4L610.6 85.6" fill="none" stroke="#4a7ebb" stroke-width="1.1"/><rect x="659.60" y="80.00" width="15.20" height="13.70" fill="#ececec"/><rect x="660.1" y="80.5" width="14.2" height="12.8" fill="none" stroke="#8c8c8c" stroke-width="1"/><rect x="659.60" y="80.00" width="15.20" height="2.40" fill="#555"/><rect x="661.40" y="84.00" width="5.60" height="1.20" fill="#4a7ebb"/><rect x="661.40" y="86.60" width="4.20" height="1.20" fill="#4a7ebb"/><rect x="661.40" y="89.40" width="5.00" height="1.20" fill="#4a7ebb"/><path d="M665.6 84.4H674.4L671.2 88V92.4L668.8 91V88Z" fill="#444"/><g fill="none" stroke="#8a8a8a" stroke-width="1"><circle cx="723.8" cy="88.6" r="13.4" fill="#fbfbfb"/><ellipse cx="723.8" cy="88.6" rx="5.6" ry="13.4"/><path d="M723.8 75.2V102M710.4 88.6H737.2M712.4 81.8H735.2M712.4 95.4H735.2"/></g><g transform="rotate(-7 731.6 101.6)"><g fill="none" stroke="#f3f3f3" stroke-width="5"><rect x="722.6" y="98.2" width="10.4" height="6.8" rx="3.4"/><rect x="730.4" y="98.2" width="10.4" height="6.8" rx="3.4"/></g><g fill="none" stroke="#3a7cc4" stroke-width="2.7"><rect x="722.6" y="98.2" width="10.4" height="6.8" rx="3.4"/><rect x="730.4" y="98.2" width="10.4" height="6.8" rx="3.4"/></g></g><path d="M1005 158L1010.4 152.8L1015.8 158" fill="none" stroke="#555" stroke-width="1.1"/><path d="M494 151.5H500M494 151.5V157.5" stroke="#777" stroke-width="1" fill="none"/><path d="M496.4 154L500.6 158.2M500.8 155V158.4H497.4" stroke="#777" stroke-width="1" fill="none"/><path d="M152.4 180.4L164.2 191.4M164.2 180.4L152.4 191.4" stroke="#b8b8b8" stroke-width="1.4" fill="none"/><path d="M190.4 186.6L194.6 190.8L203.2 181" stroke="#b8b8b8" stroke-width="1.7" fill="none"/><g fill="none" stroke="#686868" stroke-width="1"><rect x="717.5" y="622.5" width="13" height="13"/><path d="M717.5 626.8H730.5M717.5 631.2H730.5M721.8 622.5V635.5M726.2 622.5V635.5"/></g><g fill="none" stroke="#686868" stroke-width="1"><rect x="758.5" y="622.5" width="13" height="13"/><rect x="761.5" y="625.5" width="7" height="7"/><path d="M763 627.5H767M763 629.5H767"/></g><g fill="none" stroke="#686868" stroke-width="1"><rect x="799.5" y="623.5" width="13.5" height="12"/><path d="M803.2 623.5V630.5H808.8V623.5"/></g></svg>
<span class="t" style="left:124.00px;top:9.65px;font-size:14px;color:#fff;font-weight:700;transform:scaleX(0.9747);">x</span>
<span class="t" style="left:132.20px;top:17.05px;font-size:7.5px;color:#fff;transform:scaleX(0.9109);">2</span>
<span class="t" style="left:153.00px;top:9.65px;font-size:14px;color:#fff;font-weight:700;transform:scaleX(0.9747);">x</span>
<span class="t" style="left:161.20px;top:8.45px;font-size:7.5px;color:#fff;transform:scaleX(0.9588);">2</span>
<span class="t" style="left:227.00px;top:177.76px;font-size:16px;color:#555;font-family:'Liberation Serif',serif;font-style:italic;transform:scaleX(1.2351);">f</span>
<span class="t" style="left:233.50px;top:181.14px;font-size:12px;color:#555;font-family:'Liberation Serif',serif;font-style:italic;transform:scaleX(1.2762);">x</span>
<span class="t" style="left:777.80px;top:78.81px;font-size:17px;color:#3f76b8;font-style:italic;transform:scaleX(1.1107);">A</span>
<span class="t" style="left:836.30px;top:77.54px;font-size:18.5px;color:#3f76b8;font-weight:700;font-family:'Liberation Serif','DejaVu Serif',serif;transform:scaleX(0.9644);">Ω</span>
<span class="t" style="left:870.80px;top:164.88px;font-size:37px;color:#4a86c5;font-weight:700;font-style:italic;transform:scaleX(0.8828);">A</span>
<svg class="a" style="left:0;top:0" width="1024" height="643" viewBox="0 0 1024 643"><rect x="769.9" y="170.2" width="29.2" height="24.8" fill="#fff" stroke="#a2a2a2" stroke-width="1.4"/><g stroke="#c6c6c6" stroke-width="0.9"><path d="M783 175.2H796.4M783 177.8H796.4M783 180.3H796.4M783 182.6H796.4M772.8 187.6H796.4M772.8 189.8H796.4M772.8 192.1H796.4"/></g><path d="M822.8 169.4H837.2L842.6 174.8V196.4H822.8Z" fill="#fff" stroke="#a2a2a2" stroke-width="1.2"/><path d="M837.2 169.4V174.8H842.6" fill="none" stroke="#a2a2a2" stroke-width="1.1"/><rect x="824.60" y="171.60" width="9.00" height="4.40" fill="#efc673"/><rect x="824.60" y="189.60" width="15.40" height="4.60" fill="#efc673"/><path d="M928.2 168.6H942L948 174.6V195.6H928.2Z" fill="#fff" stroke="#989898" stroke-width="1.2"/><path d="M942 168.6V174.6H948" fill="none" stroke="#989898" stroke-width="1.1"/><path d="M930.4 192.4H946" stroke="#4a86c5" stroke-width="1.1"/><path d="M950.6 176.2L953.4 178.8L941.2 189.8L936.8 191.6L938.6 187.2Z" fill="#4a86c5"/><path d="M951.6 175.2L952.6 174.4A1.5 1.5 0 0 1 954.6 174.6L955.2 175.4A1.5 1.5 0 0 1 955 177.4L954.2 178.2Z" fill="#4a86c5"/><path d="M982.6 169.8H996L1001.6 175.4V196H982.6Z" fill="#fff" stroke="#989898" stroke-width="1.2"/><path d="M996 169.8V175.4H1001.6" fill="none" stroke="#989898" stroke-width="1.1"/><rect x="973.8" y="178.4" width="14.8" height="12.4" fill="#fff" stroke="#7ea6dc" stroke-width="1.1"/><rect x="973.30" y="177.80" width="15.80" height="2.40" fill="#4a7ebb"/></svg>
<span class="t" style="left:772.80px;top:173.49px;font-size:11px;color:#3f76b8;font-weight:700;transform:scaleX(0.9807);">A</span>
</body></html>
